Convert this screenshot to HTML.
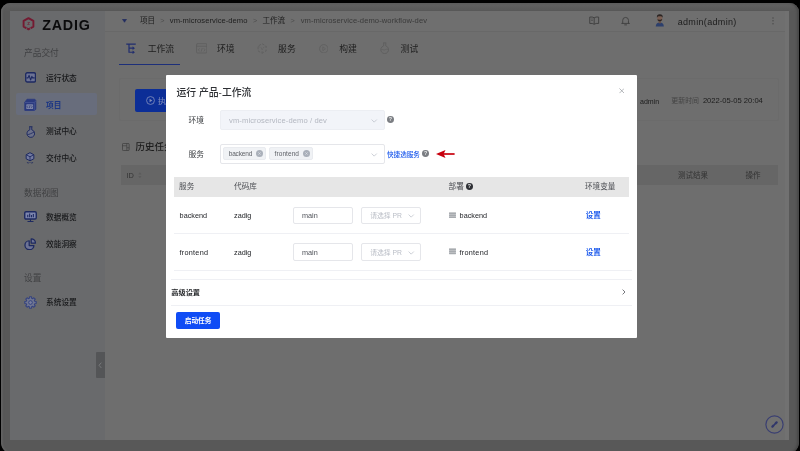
<!DOCTYPE html>
<html lang="zh-CN">
<head>
<meta charset="utf-8">
<title>Zadig - 运行 产品-工作流</title>
<style>
*{box-sizing:border-box;margin:0;padding:0}
html,body{width:800px;height:451px;overflow:hidden;background:#000}
body{position:relative;font-family:"Liberation Sans","Noto Sans CJK SC",sans-serif;font-size:7.75px;color:#1c1c1c;-webkit-font-smoothing:antialiased}
.abs{position:absolute}
.t{position:absolute;white-space:nowrap;line-height:1;transform:translateY(-50%);margin-top:.7px}
.bezel{position:absolute;left:1.1px;top:3.4px;width:797.6px;height:451px;border-radius:9px 9px 12px 12px;background:linear-gradient(#626262,#5a5a5a 6px,#585858 9px);box-shadow:inset 1.5px 0 1.5px #646464,inset -2px 0 2px #494949}
.app{will-change:transform;position:absolute;left:11px;top:10px;width:778px;height:430px;background:#6e6e6e}
.app::after{content:"";position:absolute;left:0;top:0;width:100%;height:.5px;background:#585858}
.in{position:absolute;left:0;top:.3px;width:100%;height:100%}
.sidebg{position:absolute;left:10.4px;top:10.5px;width:90px;height:429.4px;background:#696a6c}
.sbar{position:absolute;left:785px;top:10.5px;width:4px;height:429.4px;background:#717171}
/* sidebar */
.side{position:absolute;left:0;top:0;width:94px;height:100%}
.side::before{content:"";position:absolute;left:0;top:-.3px;width:94px;height:430px;background:#696a6c}
.side .grp{color:#404143;font-size:8.7px}
.side .it{font-size:7.7px;font-weight:500;color:#17181a}
.side .act{position:absolute;left:5px;top:82.5px;width:81px;height:22.5px;border-radius:2px;background:#686d7c}
.handle{position:absolute;left:85px;top:342px;width:9px;height:25.5px;background:#545557;border-radius:1px 0 0 1px}
/* topbar */
.top{position:absolute;left:94px;top:0;width:684px;height:22px;background:#6f6f6f;border-bottom:0.6px solid #686868}
.bc{font-size:7.6px;color:#1e1e1e}
.bc.g{color:#4e4e4e;font-size:7.2px}
.tabs{position:absolute;left:94px;top:21.3px;width:684px;height:33px}
.tab{font-size:8.8px;color:#1e1e1e}
.card{position:absolute;left:108px;top:67.5px;width:659.5px;height:43.5px;border:0.6px solid #6b6b6b;border-radius:2px}
.thead{position:absolute;left:110px;top:155px;width:657px;height:19.5px;background:#666666}
/* modal */
.modal{will-change:transform;position:absolute;left:166px;top:75px;width:471px;height:263.2px;background:#fff;border-radius:1px;color:#303133}
.m-title{font-size:9.85px;color:#2e3034;font-weight:500}
.lbl{font-size:7.75px;color:#3e4044}
.sel{position:absolute;border:0.6px solid #e5e6ea;border-radius:2px;background:#fff}
.sel.dis{background:#f2f4f9;border-color:#eceef3}
.tag{position:absolute;height:12.6px;border-radius:2px;background:#f0f2f5;border:0.5px solid #e9ebef;font-size:6.5px;color:#5e6167}
.th{position:absolute;left:8px;top:101.8px;width:455.2px;height:20.2px;background:#e6e6e6}
.th .t{font-size:7.6px;color:#4d4f54}
.td{font-size:7.25px;color:#222428}
.hl{position:absolute;height:0.6px;background:#eff0f4}
.link{color:#1a58ec;font-weight:500}
.btn{position:absolute;left:10.7px;top:236.7px;width:43.9px;height:17.3px;background:#0f4cf5;border-radius:2px;color:#fff;font-size:6.7px;font-weight:700;text-align:center;line-height:17.5px}
.q{position:absolute;width:6.9px;height:6.9px;border-radius:50%;background:#7b7e83;color:#eceded;font-size:5.3px;font-weight:700;text-align:center;line-height:7.3px}
</style>
</head>
<body>
<div class="bezel"></div>
<div class="sidebg"></div>
<div class="app"><div class="in">
  <!-- SIDEBAR -->
  <div class="side">
    <svg class="abs" style="left:11.4px;top:6.9px" width="13" height="13.5" viewBox="0 0 26 27"><path d="M13 2.2 22.8 7.8v11.4L13 24.8 3.2 19.2V7.8z" fill="none" stroke="#741a31" stroke-width="3.8" stroke-linejoin="round"/><path d="M9.3 21v5M16.7 21v5" stroke="#696a6c" stroke-width="1.5"/><text x="13" y="16.6" font-size="8.5" font-weight="700" fill="#741a31" text-anchor="middle" font-family="Liberation Sans,sans-serif">Z</text></svg>
    <div class="t" style="left:31.3px;top:14.2px;font-size:14.3px;font-weight:700;letter-spacing:.75px;color:#0b0b0c">ZADIG</div>
    <div class="t grp" style="left:13px;top:42.5px">产品交付</div>

    <svg class="abs" style="left:13.8px;top:61.7px" width="11.2" height="10.8" viewBox="0 0 22 21"><rect x="1.4" y="1.4" width="19.2" height="18.2" rx="3" fill="#6d7394" stroke="#1d2960" stroke-width="2.6"/><path d="M3 11.5h3l2-5 3 9 2.5-7 1.5 3h4" fill="none" stroke="#1d2960" stroke-width="2.2" stroke-linejoin="round"/></svg>
    <div class="t it" style="left:35px;top:67.6px">运行状态</div>

    <div class="act"></div>
    <svg class="abs" style="left:13px;top:87.6px" width="12.6" height="13.6" viewBox="0 0 25 27"><path d="M1.5 8.5 6 2.5h15.5l2 2.5v17.5l-3.5 3H3a1.5 1.5 0 0 1-1.5-1.5z" fill="#2b3a7e" stroke="#2b3a7e" stroke-width="1.6" stroke-linejoin="round"/><path d="M2 9h18.5l3-3.5M20.5 9v16" fill="none" stroke="#5563a0" stroke-width="1.1"/><rect x="4.5" y="12.5" width="13.5" height="9.5" rx="1.2" fill="#7b83a6"/><path d="M8 15l-1.8 2.3L8 19.6M14.5 15l1.8 2.3-1.8 2.3M12 14.5l-1.5 5.5" fill="none" stroke="#232f6a" stroke-width="1.2"/></svg>
    <div class="t it" style="left:35px;top:94.7px;color:#1c3684;font-weight:700">项目</div>

    <svg class="abs" style="left:14.7px;top:115.4px" width="9.6" height="12" viewBox="0 0 20 25"><path d="M6.5 1.5h7M8 2v6a8 8 0 1 0 4 0V2" fill="#6b7089" stroke="#1d2960" stroke-width="2" stroke-linejoin="round"/><path d="M3 18c3 0 9-3 14-5.5" fill="none" stroke="#1d2960" stroke-width="1.8"/></svg>
    <div class="t it" style="left:35px;top:120.8px">测试中心</div>

    <svg class="abs" style="left:14.2px;top:142px" width="10" height="12.2" viewBox="0 0 22 27"><path d="M11 1.5 19.5 6v9L11 19.5 2.5 15V6z" fill="#737aa0" stroke="#1d2960" stroke-width="2.2" stroke-linejoin="round"/><path d="M3 6.3 11 10.5l8-4.2M11 10.5V19" fill="none" stroke="#1d2960" stroke-width="1.9"/><path d="M4.5 22.5l2.5 2.5 2.5-2.5M12.5 22.5l2.5 2.5 2.5-2.5" fill="none" stroke="#1d2960" stroke-width="1.9"/></svg>
    <div class="t it" style="left:35px;top:148.2px">交付中心</div>

    <div class="t grp" style="left:13px;top:182.2px">数据视图</div>
    <svg class="abs" style="left:13px;top:201.2px" width="13" height="11" viewBox="0 0 26 22"><rect x="1.5" y="1.5" width="23" height="14.5" rx="2.5" fill="#7d86ae" stroke="#1d2960" stroke-width="2.8"/><path d="M7.5 12.5V7.5M11.3 12.5V5M15 12.5V8M18.7 12.5V6" stroke="#1d2960" stroke-width="2.2"/><path d="M13 16.5v4M7 21h12" stroke="#1d2960" stroke-width="2.2"/></svg>
    <div class="t it" style="left:35px;top:206.7px">数据概览</div>

    <svg class="abs" style="left:13.4px;top:227.5px" width="12.4" height="12" viewBox="0 0 24 24"><path d="M10 5.5A9 9 0 1 0 19.5 15H10z" fill="#6d7394" stroke="#1d2960" stroke-width="2.5" stroke-linejoin="round"/><path d="M14 1.5a8.5 8.5 0 0 1 8.5 8.5H14z" fill="#6d7394" stroke="#1d2960" stroke-width="2.5" stroke-linejoin="round"/></svg>
    <div class="t it" style="left:35px;top:233.8px">效能洞察</div>

    <div class="t grp" style="left:13px;top:267px">设置</div>
    <svg class="abs" style="left:13px;top:285.4px" width="13" height="13" viewBox="-13 -13 26 26"><path d="M-2.3 -8.5 -2.0 -11.4 2.0 -11.4 2.3 -8.5 4.4 -7.6 6.7 -9.5 9.5 -6.7 7.6 -4.4 8.5 -2.3 11.4 -2.0 11.4 2.0 8.5 2.3 7.6 4.4 9.5 6.7 6.7 9.5 4.4 7.6 2.3 8.5 2.0 11.4 -2.0 11.4 -2.3 8.5 -4.4 7.6 -6.7 9.5 -9.5 6.7 -7.6 4.4 -8.5 2.3 -11.4 2.0 -11.4 -2.0 -8.5 -2.3 -7.6 -4.4 -9.5 -6.7 -6.7 -9.5 -4.4 -7.6z" fill="#6f7590" stroke="#34427f" stroke-width="2.1" stroke-linejoin="round"/><circle r="3.7" fill="#7a80a0" stroke="#34427f" stroke-width="1.9"/></svg>
    <div class="t it" style="left:35px;top:292.1px">系统设置</div>

    <div class="handle"><svg class="abs" style="left:2.4px;top:9.4px" width="4.2" height="6.6" viewBox="0 0 5 8"><path d="M4 .8 1.2 4 4 7.2" fill="none" stroke="#808183" stroke-width="1"/></svg></div>
  </div>

  <!-- TOPBAR -->
  <div class="top">
    <svg class="abs" style="left:17.4px;top:9.2px" width="5" height="3.6" viewBox="0 0 10 7"><path d="M.8.5h8.4L5 6.5z" fill="#202b60" stroke="#202b60" stroke-width="1" stroke-linejoin="round"/></svg>
    <div class="t bc" style="left:35px;top:10.4px">项目</div>
    <div class="t bc g" style="left:55.3px;top:10.3px">&gt;</div>
    <div class="t bc" style="left:64.8px;top:10.3px;letter-spacing:.045px" id="bc1">vm-microservice-demo</div>
    <div class="t bc g" style="left:148px;top:10.3px">&gt;</div>
    <div class="t bc" style="left:157.5px;top:10.4px;font-size:7.5px">工作流</div>
    <div class="t bc g" style="left:185.5px;top:10.3px">&gt;</div>
    <div class="t bc" style="left:195.7px;top:10.3px;color:#3a3a3a;letter-spacing:.085px" id="bc2">vm-microservice-demo-workflow-dev</div>

    <svg class="abs" style="left:484.2px;top:5.6px" width="10.4" height="9" viewBox="0 0 21 18"><path d="M10.5 3.5C8.5 2 5 1.5 1.5 2v13c3.5-.5 7 0 9 1.5 2-1.5 5.5-2 9-1.5V2c-3.5-.5-7 0-9 1.5zM10.5 3.5v13" fill="none" stroke="#404040" stroke-width="1.9" stroke-linejoin="round"/><path d="M4 6h4M4 9h4" stroke="#4a4a4a" stroke-width="1.3"/></svg>
    <svg class="abs" style="left:516.1px;top:5.7px" width="9.2" height="9.6" viewBox="0 0 18 20"><path d="M3 15V9a6 6 0 0 1 12 0v6M1 15.5h16M7 18.5h4" fill="none" stroke="#404040" stroke-width="1.9" stroke-linecap="round"/></svg>
    <svg class="abs" style="left:550.4px;top:4.2px" width="9.6" height="12.6" viewBox="0 0 19 25"><path d="M1.5 25c0-5 3-8 8-8s8 3 8 8z" fill="#2c3f6c"/><rect x="7.3" y="12" width="4.4" height="6.5" fill="#6b5247"/><rect x="4.6" y="3" width="9.8" height="11.5" rx="4" fill="#7a5e52"/><path d="M3.8 7.5c-.5-5 1.5-6.8 5.7-6.8s6.2 1.8 5.7 6.8c-1-2.3-2.5-3-5.7-3s-4.7.7-5.7 3z" fill="#2b2422"/><path d="M4.8 10.5c.5 5.5 8.9 5.5 9.4 0-1.5 1.3-7.9 1.3-9.4 0z" fill="#2b2422"/></svg>
    <div class="t" style="left:572.7px;top:11.2px;font-size:9px;letter-spacing:.33px;color:#1c1c1c" id="usr">admin(admin)</div>
    <svg class="abs" style="left:667.3px;top:6.8px" width="2" height="7.6" viewBox="0 0 2 8"><circle cx="1" cy="1" r=".8" fill="#4c4c4c"/><circle cx="1" cy="4" r=".8" fill="#4c4c4c"/><circle cx="1" cy="7" r=".8" fill="#4c4c4c"/></svg>
  </div>

  <!-- TABS -->
  <div class="tabs">
    <svg class="abs" style="left:21.4px;top:11.5px" width="10" height="10.6" viewBox="0 0 19 20"><path d="M.5 2.2h18M5.7 2.2v15.3h8M5.7 9.8h8" fill="none" stroke="#202d6e" stroke-width="2.3"/><path d="M12.5 6.3l4.5 3.5-4.5 3.5zM12.5 14l4.5 3.5-4.5 3.5z" fill="#202d6e"/></svg>
    <div class="t tab" style="left:42.7px;top:16.9px">工作流</div>
    <div class="abs" style="left:13.7px;top:32.3px;width:61.3px;height:1.3px;background:#1d2f7a"></div>

    <svg class="abs" style="left:90.6px;top:11.8px" width="11.4" height="10.6" viewBox="0 0 22 20"><rect x="1" y="1" width="20" height="18" rx="2" fill="none" stroke="#5d5d5d" stroke-width="1.5"/><path d="M1 6h20" stroke="#5d5d5d" stroke-width="1.5"/><path d="M7 10l-2.5 3L7 16M15 10l2.5 3L15 16M12 9.5l-2 7" fill="none" stroke="#5d5d5d" stroke-width="1.3"/></svg>
    <div class="t tab" style="left:112px;top:16.9px">环境</div>

    <svg class="abs" style="left:152px;top:11.8px" width="10.2" height="11" viewBox="0 0 20 22"><path d="M10 1.5 18 6v10l-8 4.5L2 16V6z" fill="none" stroke="#5d5d5d" stroke-width="1.6" stroke-dasharray="5 3.2"/><path d="M10 11V20M2.5 6.5 10 11l7.5-4.5" fill="none" stroke="#5d5d5d" stroke-width="1.3" stroke-dasharray="3 2.5"/></svg>
    <div class="t tab" style="left:173.1px;top:16.9px">服务</div>

    <svg class="abs" style="left:213.7px;top:12.1px" width="9.6" height="9.6" viewBox="0 0 20 20"><circle cx="10" cy="10" r="8.8" fill="none" stroke="#5d5d5d" stroke-width="1.5"/><path d="M8 6l5.5 4L8 14z" fill="none" stroke="#5d5d5d" stroke-width="1.3" stroke-linejoin="round"/></svg>
    <div class="t tab" style="left:234.3px;top:16.9px">构建</div>

    <svg class="abs" style="left:275px;top:10.8px" width="9.4" height="12" viewBox="0 0 18 23"><path d="M6 1.5h6M7 2v5.5a7.5 7.5 0 1 0 4 0V2" fill="none" stroke="#5d5d5d" stroke-width="1.5" stroke-linejoin="round"/><path d="M2.5 15c2.5-1.5 4.5 1.2 7 0s3.5-1.5 6-.3" fill="none" stroke="#5d5d5d" stroke-width="1.2"/></svg>
    <div class="t tab" style="left:295.6px;top:16.9px">测试</div>
  </div>

  <!-- CONTENT -->
  <div class="card"></div>
  <div class="abs" style="left:123.7px;top:79px;width:60px;height:22.4px;border-radius:2px;background:#0c2e97"></div>
  <svg class="abs" style="left:134.8px;top:85.7px" width="9" height="9" viewBox="0 0 16 16"><circle cx="8" cy="8" r="7" fill="none" stroke="#7f8cbc" stroke-width="1.5"/><path d="M6.3 4.8 11.3 8l-5 3.2z" fill="#7f8cbc"/></svg>
  <div class="t" style="left:146.8px;top:90.2px;font-size:8.3px;color:#7f8cbc">执行</div>
  <div class="t" style="left:629px;top:89.8px;font-size:7px;color:#1c1c1c">admin</div>
  <div class="t" style="left:660.3px;top:89.8px;font-size:6.95px;color:#444">更新时间</div>
  <div class="t" style="left:691.9px;top:89.8px;font-size:7.6px;color:#1c1c1c" id="dt">2022-05-05 20:04</div>

  <svg class="abs" style="left:111.3px;top:132.4px" width="7.6" height="8" viewBox="0 0 15 16"><rect x=".8" y=".8" width="13.4" height="14.4" rx="2" fill="none" stroke="#3c3c3c" stroke-width="1.5"/><path d="M.8 5.5h8.7V.8M9.5 9.5h4.7M9.5 5.5v9.5" fill="none" stroke="#3c3c3c" stroke-width="1.3"/></svg>
  <div class="t" style="left:124.4px;top:136.1px;font-size:9.5px;font-weight:500;color:#1c1c1c">历史任务</div>
  <div class="thead"></div>
  <div class="t" style="left:115.4px;top:164.8px;font-size:7.4px;color:#333">ID</div>
  <svg class="abs" style="left:127.2px;top:161.4px" width="3.8" height="6.6" viewBox="0 0 8 13"><path d="M4 0l3.5 5h-7zM4 13l3.5-5h-7z" fill="#5b5b5b"/></svg>
  <div class="t" style="left:667px;top:164.8px;font-size:7.5px;color:#333">测试结果</div>
  <div class="t" style="left:734.4px;top:164.8px;font-size:7.5px;color:#333">操作</div>

  <svg class="abs" style="left:754px;top:404.5px" width="19" height="19" viewBox="0 0 19 19"><circle cx="9.5" cy="9.5" r="8.6" fill="#717170" stroke="#3a3f72" stroke-width="1.2"/><path d="M7.4 11.6l1.3-1.3M10.3 8.7l1.3-1.3" stroke="#30366a" stroke-width="2.2" stroke-linecap="round"/><path d="M8 11l3-3" stroke="#30366a" stroke-width="1"/></svg>
</div></div>
<div class="sbar"></div>

<!-- MODAL -->
<div class="modal"><div class="in" style="left:-.5px;top:-.2px">
  <div class="t m-title" style="left:11px;top:17.7px">运行 产品-工作流</div>
  <svg class="abs" style="left:453.2px;top:13.1px" width="5.6" height="5.6" viewBox="0 0 10 10"><path d="M.8.8l8.4 8.4M9.2.8.8 9.2" stroke="#8a8d93" stroke-width="1.1"/></svg>

  <div class="t lbl" style="left:23px;top:45.2px">环境</div>
  <div class="sel dis" style="left:54px;top:35.2px;width:165px;height:19.5px"></div>
  <div class="t" style="left:63.5px;top:45.1px;font-size:7.6px;letter-spacing:.1px;color:#b3b7c0" id="envt">vm-microservice-demo / dev</div>
  <svg class="abs" style="left:205.8px;top:44px" width="6.4" height="4" viewBox="0 0 11 7"><path d="M1 1l4.5 4.5L10 1" fill="none" stroke="#b9bdc6" stroke-width="1.25"/></svg>
  <div class="q" style="left:221.4px;top:41.2px">?</div>

  <div class="t lbl" style="left:23px;top:79px">服务</div>
  <div class="sel" style="left:54px;top:69.2px;width:165px;height:19.7px"></div>
  <div class="tag" style="left:57.8px;top:72.5px;width:42.9px"><span class="t" style="left:4.4px;top:5.3px;letter-spacing:-.15px" id="tg1">backend</span><svg class="abs" style="left:31.7px;top:2.1px" width="7" height="7" viewBox="0 0 12 12"><circle cx="6" cy="6" r="6" fill="#aab0ba"/><path d="M4 4l4 4M8 4 4 8" stroke="#e4e6ea" stroke-width="1"/></svg></div>
  <div class="tag" style="left:103.9px;top:72.5px;width:43.5px"><span class="t" style="left:4.2px;top:5.3px;letter-spacing:.08px" id="tg2">frontend</span><svg class="abs" style="left:32.6px;top:2.1px" width="7" height="7" viewBox="0 0 12 12"><circle cx="6" cy="6" r="6" fill="#aab0ba"/><path d="M4 4l4 4M8 4 4 8" stroke="#e4e6ea" stroke-width="1"/></svg></div>
  <svg class="abs" style="left:205.8px;top:77.7px" width="6.4" height="4" viewBox="0 0 11 7"><path d="M1 1l4.5 4.5L10 1" fill="none" stroke="#b9bdc6" stroke-width="1.25"/></svg>
  <div class="t link" style="left:221.5px;top:79px;font-size:6.6px">快捷选服务</div>
  <div class="q" style="left:256.7px;top:75.1px">?</div>
  <svg class="abs" style="left:270.6px;top:74.9px" width="19" height="8" viewBox="0 0 19 8"><path d="M6 4h12.6" stroke="#c8000e" stroke-width="1.7"/><path d="M0 4 9.5 .1 7.6 4 9.5 7.9z" fill="#c8000e"/></svg>

  <div class="th">
    <div class="t" style="left:5.6px;top:10.2px">服务</div>
    <div class="t" style="left:60.6px;top:10.2px">代码库</div>
    <div class="t" style="left:275.1px;top:10.2px">部署</div>
    <div class="q" style="left:292.4px;top:6.8px;background:#2e3035">?</div>
    <div class="t" style="left:411.5px;top:10.2px">环境变量</div>
  </div>

  <!-- row 1 -->
  <div class="t td" style="left:14.1px;top:140.3px" id="r1a">backend</div>
  <div class="t td" style="left:68.5px;top:140.3px" id="r1b">zadig</div>
  <div class="sel" style="left:127.8px;top:131.7px;width:59.4px;height:17.2px"></div>
  <div class="t td" style="left:136.5px;top:140.3px;color:#50535a" id="r1c">main</div>
  <div class="sel" style="left:195.6px;top:131.7px;width:59.6px;height:17.2px"></div>
  <div class="t" style="left:204.7px;top:140.3px;font-size:6.8px;color:#b9bdc6" id="r1d">请选择 PR</div>
  <svg class="abs" style="left:242.8px;top:138.9px" width="6.4" height="4" viewBox="0 0 11 7"><path d="M1 1l4.5 4.5L10 1" fill="none" stroke="#b9bdc6" stroke-width="1.25"/></svg>
  <svg class="abs dep" style="left:283.8px;top:136.8px" width="7" height="6.6" viewBox="0 0 14 13"><path d="M.5 1.2h13v2.6H.5zM.5 5.2h13v2.6H.5zM.5 9.2h13v2.6H.5z" fill="#b4b7bc" stroke="#8e9196" stroke-width=".9"/></svg>
  <div class="t td" style="left:294.1px;top:140.3px" id="r1e">backend</div>
  <div class="t td link" style="left:420.3px;top:140.3px;font-size:7.5px;font-weight:700">设置</div>
  <div class="hl" style="left:8.5px;top:158.2px;width:454.7px"></div>

  <!-- row 2 -->
  <div class="t td" style="left:14.1px;top:177.1px;letter-spacing:.25px" id="r2a">frontend</div>
  <div class="t td" style="left:68.5px;top:177.1px">zadig</div>
  <div class="sel" style="left:127.8px;top:168.5px;width:59.4px;height:17.2px"></div>
  <div class="t td" style="left:136.5px;top:177.1px;color:#50535a">main</div>
  <div class="sel" style="left:195.6px;top:168.5px;width:59.6px;height:17.2px"></div>
  <div class="t" style="left:204.7px;top:177.1px;font-size:6.8px;color:#b9bdc6">请选择 PR</div>
  <svg class="abs" style="left:242.8px;top:175.7px" width="6.4" height="4" viewBox="0 0 11 7"><path d="M1 1l4.5 4.5L10 1" fill="none" stroke="#b9bdc6" stroke-width="1.25"/></svg>
  <svg class="abs dep" style="left:283.8px;top:173.6px" width="7" height="6.6" viewBox="0 0 14 13"><path d="M.5 1.2h13v2.6H.5zM.5 5.2h13v2.6H.5zM.5 9.2h13v2.6H.5z" fill="#b4b7bc" stroke="#8e9196" stroke-width=".9"/></svg>
  <div class="t td" style="left:294.1px;top:177.1px;letter-spacing:.25px" id="r2e">frontend</div>
  <div class="t td link" style="left:420.3px;top:177.1px;font-size:7.5px;font-weight:700">设置</div>
  <div class="hl" style="left:8.5px;top:195.2px;width:457.7px"></div>

  <!-- collapse -->
  <div class="hl" style="left:5.8px;top:203.7px;width:460.4px"></div>
  <div class="t" style="left:5.8px;top:217.3px;font-size:7.2px;font-weight:700;color:#1f2124">高级设置</div>
  <svg class="abs" style="left:456.2px;top:214.3px" width="3.6" height="6" viewBox="0 0 6 10"><path d="M1 1l4 4-4 4" fill="none" stroke="#54575d" stroke-width="1.35"/></svg>
  <div class="hl" style="left:5.8px;top:230.2px;width:460.4px"></div>

  <div class="btn">启动任务</div>
</div></div>
</body>
</html>
